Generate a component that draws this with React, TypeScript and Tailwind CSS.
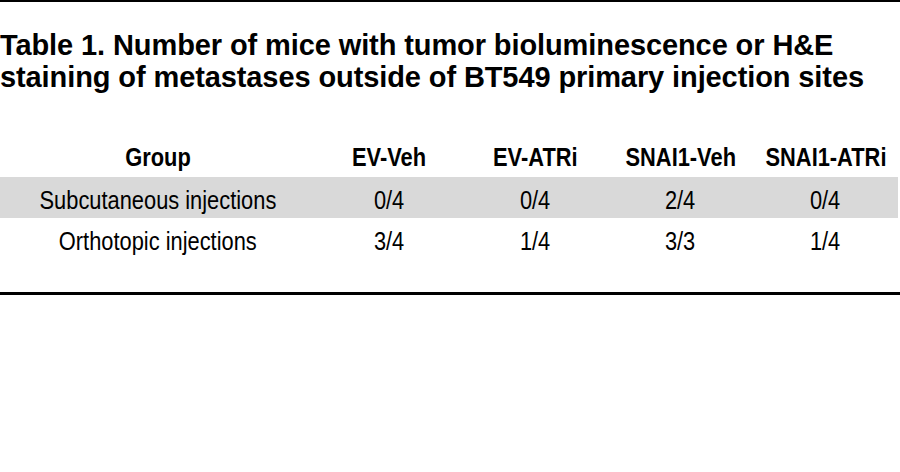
import React from "react";

const cols = ["EV-Veh", "EV-ATRi", "SNAI1-Veh", "SNAI1-ATRi"];
const rows = [
  { name: "Subcutaneous injections", vals: ["0/4", "0/4", "2/4", "0/4"], shade: true },
  { name: "Orthotopic injections", vals: ["3/4", "1/4", "3/3", "1/4"], shade: false },
];

const grid = "grid grid-cols-[316px_146px_146px_145px_145px] w-[898px]";

function Cell({ children }: { children: React.ReactNode }) {
  return (
    <div className="text-center whitespace-nowrap">
      <span className="inline-block scale-x-[0.84]">{children}</span>
    </div>
  );
}

export default function App() {
  return (
    <div className="w-[900px] h-[472px] bg-white text-black overflow-hidden">
      <div className="h-[2px] bg-black" />
      <div
        className="mt-[27px] text-[29px] leading-[32px] font-bold tracking-[-0.1px]"
        style={{ fontFamily: '"Liberation Sans", Arial, sans-serif' }}
      >
        <div>Table 1. Number of mice with tumor bioluminescence or H&amp;E</div>
        <div>staining of metastases outside of BT549 primary injection sites</div>
      </div>
      <div
        className="mt-[45px]"
        style={{ fontFamily: '"Liberation Sans", Arial, sans-serif' }}
      >
        <div className={`${grid} h-[39px] text-[26px] leading-[29px] font-bold pt-[5px]`}>
          <Cell>Group</Cell>
          {cols.map((c) => (
            <Cell key={c}>{c}</Cell>
          ))}
        </div>
        {rows.map((r) => (
          <div
            key={r.name}
            className={`${grid} h-[41px] text-[26px] leading-[29px] pt-[9px] ${r.shade ? "bg-[#d9d9d9]" : ""}`}
          >
            <Cell>{r.name}</Cell>
            {r.vals.map((v, i) => (
              <Cell key={i}>{v}</Cell>
            ))}
          </div>
        ))}
      </div>
      <div className="mt-[33px] h-[3px] bg-black" />
    </div>
  );
}
